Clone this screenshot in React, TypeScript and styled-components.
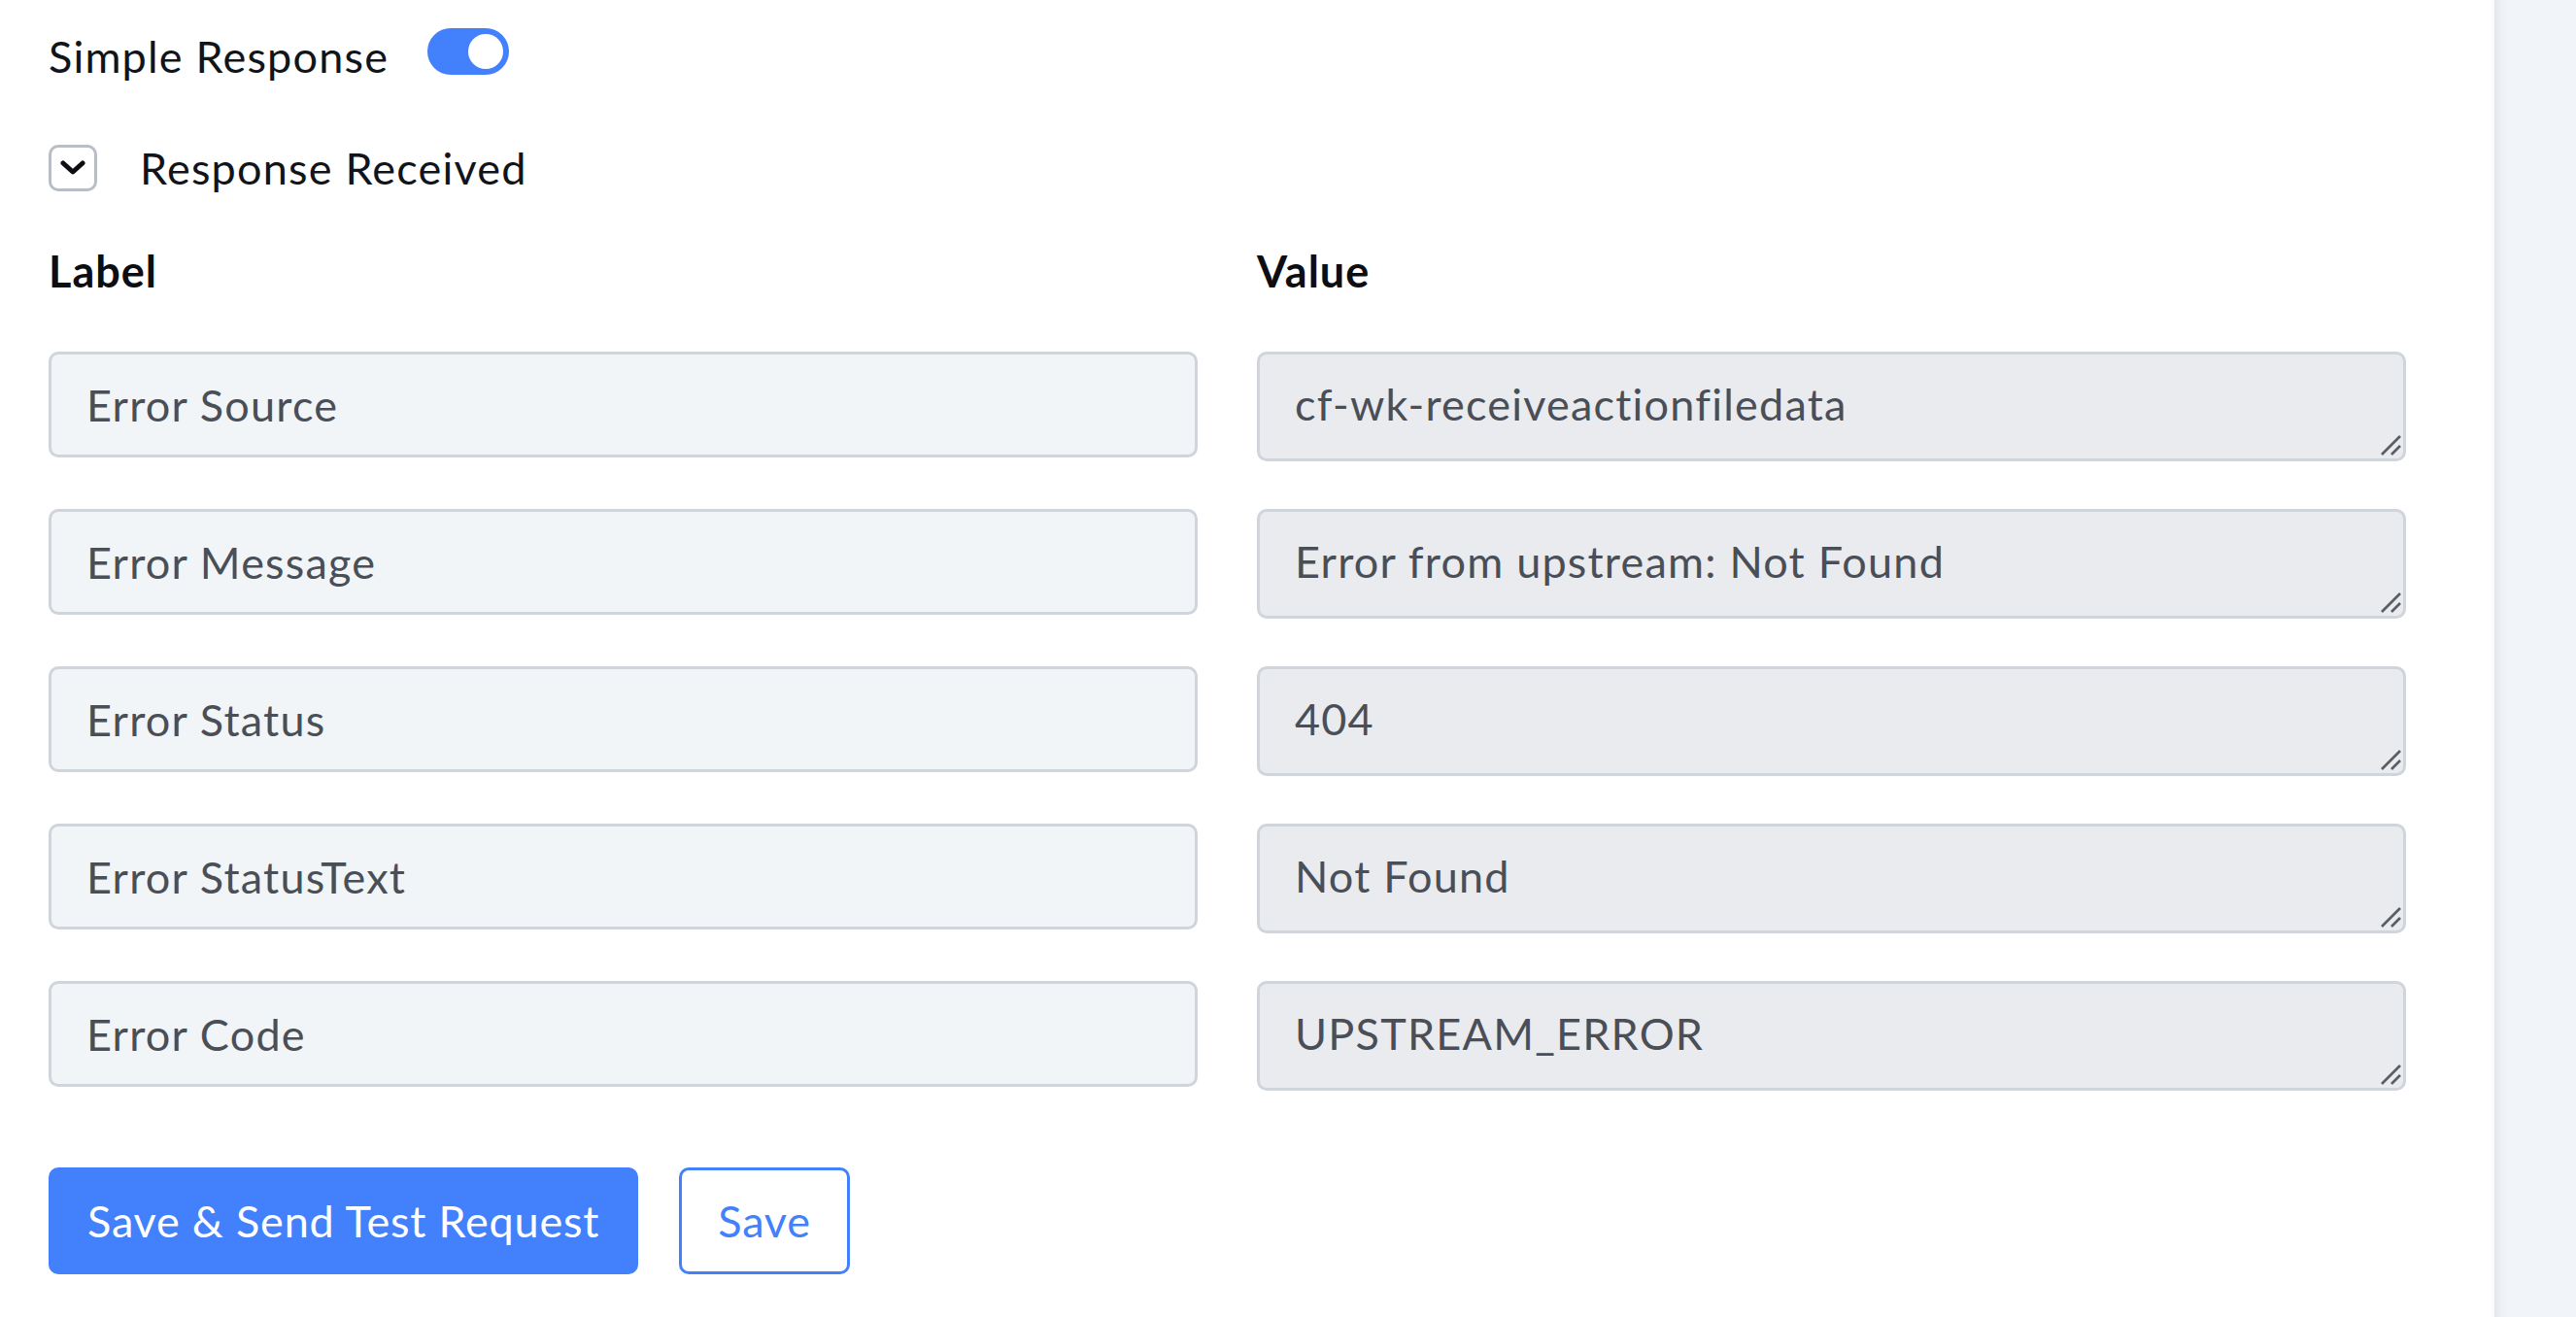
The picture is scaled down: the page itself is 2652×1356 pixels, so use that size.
import React, { useState } from 'react';
import styled, { createGlobalStyle } from 'styled-components';

const GlobalStyle = createGlobalStyle`
  html, body {
    margin: 0;
    padding: 0;
    background: #ffffff;
  }
  body {
    font-family: Lato, "Open Sans", "Liberation Sans", sans-serif;
    color: #111418;
  }
  * { box-sizing: border-box; }
`;

const Page = styled.div`
  display: flex;
  min-height: 100vh;
  background: #ffffff;
`;

const Main = styled.main`
  flex: 1;
  padding: 29px 88px 40px 50px;
  display: flex;
  flex-direction: column;
`;

const SideRail = styled.aside`
  width: 87px;
  background: linear-gradient(to right, #e3e6eb 0px, #eef1f5 8px, #f1f4f8 14px);
  border-left: 3px solid #fafbfc;
`;

const ToggleRow = styled.div`
  display: flex;
  align-items: center;
  gap: 40px;
  height: 48px;
`;

const RowText = styled.span<{ $drop?: number }>`
  font-size: 45px;
  line-height: 1.2;
  font-weight: 400;
  letter-spacing: 1.2px;
  color: #111418;
  margin-top: ${(p) => p.$drop ?? 0}px;
`;

const Switch = styled.button<{ $on: boolean }>`
  position: relative;
  flex: none;
  width: 84px;
  height: 48px;
  border: none;
  border-radius: 24px;
  padding: 0;
  cursor: pointer;
  background: ${(p) => (p.$on ? '#4380fc' : '#c9ced6')};

  &::after {
    content: '';
    position: absolute;
    top: 6px;
    left: ${(p) => (p.$on ? '42px' : '6px')};
    width: 36px;
    height: 36px;
    border-radius: 50%;
    background: #ffffff;
  }
`;

const CollapseRow = styled.div`
  display: flex;
  align-items: center;
  gap: 44px;
  margin-top: 69px;
`;

const ChevronBox = styled.button`
  width: 50px;
  height: 48px;
  border: 3px solid #b8bec7;
  border-radius: 10px;
  background: #ffffff;
  display: flex;
  align-items: center;
  justify-content: center;
  padding: 0;
  cursor: pointer;
`;

const FieldGrid = styled.div`
  display: grid;
  grid-template-columns: 1fr 1fr;
  column-gap: 61px;
  row-gap: 49px;
  align-items: start;
  margin-top: 52px;
`;

const ColumnHead = styled.div`
  font-size: 45px;
  line-height: 1.2;
  font-weight: 700;
  letter-spacing: 1px;
  color: #0c0e11;
  margin-bottom: 7px;
`;

const LabelInput = styled.input`
  width: 100%;
  height: 109px;
  border: 3px solid #d0d4db;
  border-radius: 10px;
  background: #f2f5f8;
  padding: 0 36px;
  font-family: inherit;
  font-size: 45px;
  letter-spacing: 1.2px;
  color: #4a4f57;
  outline: none;
`;

const ValueCell = styled.div`
  position: relative;
`;

const ValueArea = styled.textarea`
  display: block;
  width: 100%;
  height: 113px;
  border: 3px solid #d0d4db;
  border-radius: 10px;
  background: #e9ebef;
  padding: 24px 36px 0;
  font-family: inherit;
  font-size: 45px;
  line-height: 1.2;
  letter-spacing: 1.2px;
  color: #4a4f57;
  outline: none;
  overflow: hidden;
  resize: none;
`;

// resize grip drawn over the textarea corner
const Grip = styled.svg`
  position: absolute;
  right: 5px;
  bottom: 5px;
  width: 22px;
  height: 22px;
  pointer-events: none;
`;

const ButtonBar = styled.div`
  display: flex;
  gap: 42px;
  margin-top: 79px;
`;

const Button = styled.button<{ $primary?: boolean }>`
  height: 110px;
  padding: 0 37px;
  border-radius: 10px;
  border: 3px solid #4380fc;
  background: ${(p) => (p.$primary ? '#4380fc' : '#ffffff')};
  color: ${(p) => (p.$primary ? '#ffffff' : '#4380fc')};
  font-family: inherit;
  font-size: 45px;
  letter-spacing: 0.8px;
  cursor: pointer;
`;

const fields = [
  { label: 'Error Source', value: 'cf-wk-receiveactionfiledata' },
  { label: 'Error Message', value: 'Error from upstream: Not Found' },
  { label: 'Error Status', value: '404' },
  { label: 'Error StatusText', value: 'Not Found' },
  { label: 'Error Code', value: 'UPSTREAM_ERROR' },
];

export default function App() {
  const [simple, setSimple] = useState(true);

  return (
    <>
      <GlobalStyle />
      <Page>
        <Main>
          <ToggleRow>
            <RowText $drop={9}>Simple Response</RowText>
            <Switch $on={simple} onClick={() => setSimple(!simple)} aria-label="Simple Response" />
          </ToggleRow>

          <CollapseRow>
            <ChevronBox aria-label="Collapse">
              <svg width="26" height="16" viewBox="0 0 26 16">
                <polyline points="3,3 13,12 23,3" fill="none" stroke="#0c0e11" strokeWidth="5" strokeLinecap="round" strokeLinejoin="round" />
              </svg>
            </ChevronBox>
            <RowText>Response Received</RowText>
          </CollapseRow>

          <FieldGrid>
            <ColumnHead>Label</ColumnHead>
            <ColumnHead>Value</ColumnHead>
            {fields.map((f) => (
              <React.Fragment key={f.label}>
                <LabelInput defaultValue={f.label} />
                <ValueCell>
                  <ValueArea readOnly value={f.value} />
                  <Grip viewBox="0 0 22 22">
                    <line x1="2" y1="20" x2="21" y2="1" stroke="#5a5d62" strokeWidth="2.6" />
                    <line x1="12" y1="20" x2="21" y2="11" stroke="#5a5d62" strokeWidth="2.6" />
                  </Grip>
                </ValueCell>
              </React.Fragment>
            ))}
          </FieldGrid>

          <ButtonBar>
            <Button $primary>Save &amp; Send Test Request</Button>
            <Button>Save</Button>
          </ButtonBar>
        </Main>
        <SideRail />
      </Page>
    </>
  );
}
